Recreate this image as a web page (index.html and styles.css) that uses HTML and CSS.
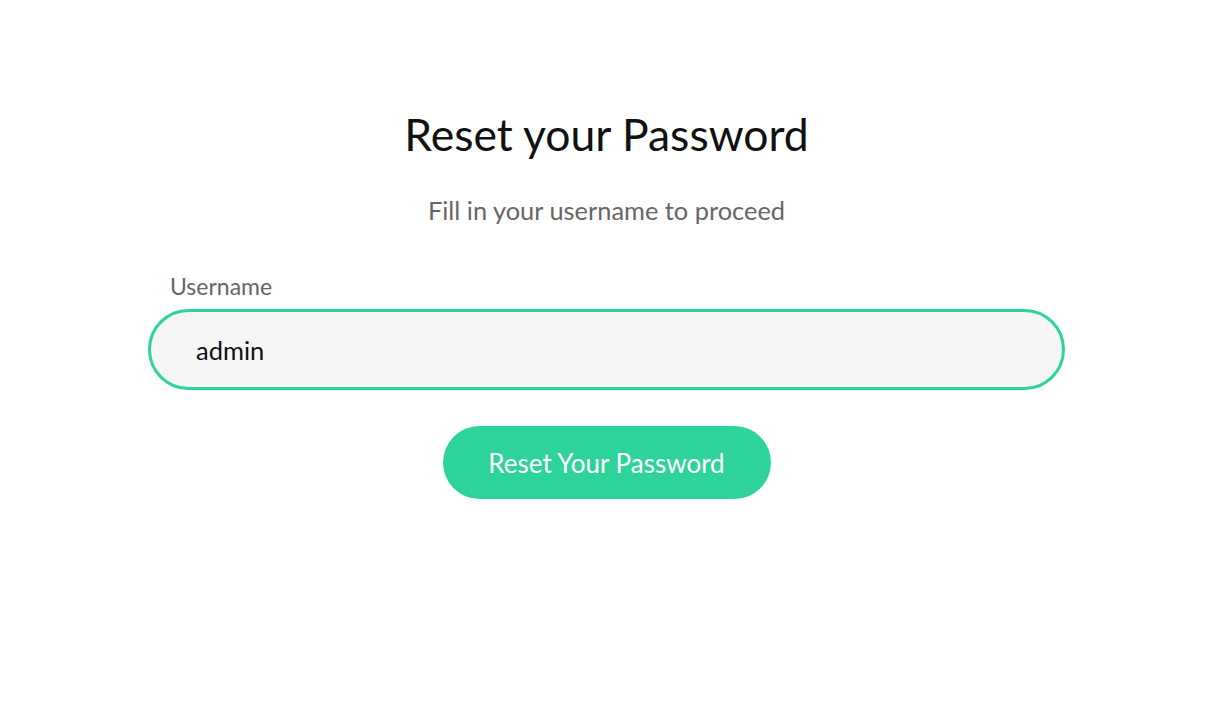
FILE: index.html
```html
<!DOCTYPE html>
<html lang="en">
<head>
<meta charset="utf-8">
<title>Reset your Password</title>
<link rel="stylesheet" href="styles.css">
</head>
<body>
<main class="page">
  <form class="card">
    <h1 class="title">Reset your Password</h1>
    <p class="subtitle">Fill in your username to proceed</p>
    <div class="field">
      <label class="label" for="username">Username</label>
      <input class="input" id="username" type="text" value="admin">
    </div>
    <button class="button" type="button">Reset Your Password</button>
  </form>
</main>
</body>
</html>
```
FILE: styles.css
```css
html, body {
  margin: 0;
  padding: 0;
  background: #ffffff;
  font-family: Lato, "Open Sans", sans-serif;
}
.page {
  display: flex;
  justify-content: center;
  padding-top: 107px;
}
.card {
  width: 917px;
  display: flex;
  flex-direction: column;
  align-items: center;
}
.title {
  margin: 0;
  font-size: 44.5px;
  font-weight: 400;
  color: #111111;
  line-height: 54px;
}
.subtitle {
  margin: 34px 0 0;
  font-size: 25.4px;
  color: #666666;
  line-height: 30px;
}
.field {
  align-self: stretch;
  display: flex;
  flex-direction: column;
  margin-top: 47px;
}
.label {
  font-size: 23px;
  color: #666666;
  padding-left: 22px;
  line-height: 28px;
  margin-bottom: 9px;
}
.input {
  box-sizing: border-box;
  height: 81px;
  width: 100%;
  border: 3px solid #2ed39b;
  border-radius: 41px;
  background: #f6f6f6;
  padding: 0 45px;
  font-family: Lato, sans-serif;
  font-size: 25.5px;
  color: #111111;
  outline: none;
}
.button {
  margin-top: 36px;
  width: 328px;
  height: 73px;
  border: none;
  border-radius: 37px;
  background: #2ed39b;
  color: #ffffff;
  font-family: Lato, sans-serif;
  font-size: 26px;
  cursor: pointer;
}
```
